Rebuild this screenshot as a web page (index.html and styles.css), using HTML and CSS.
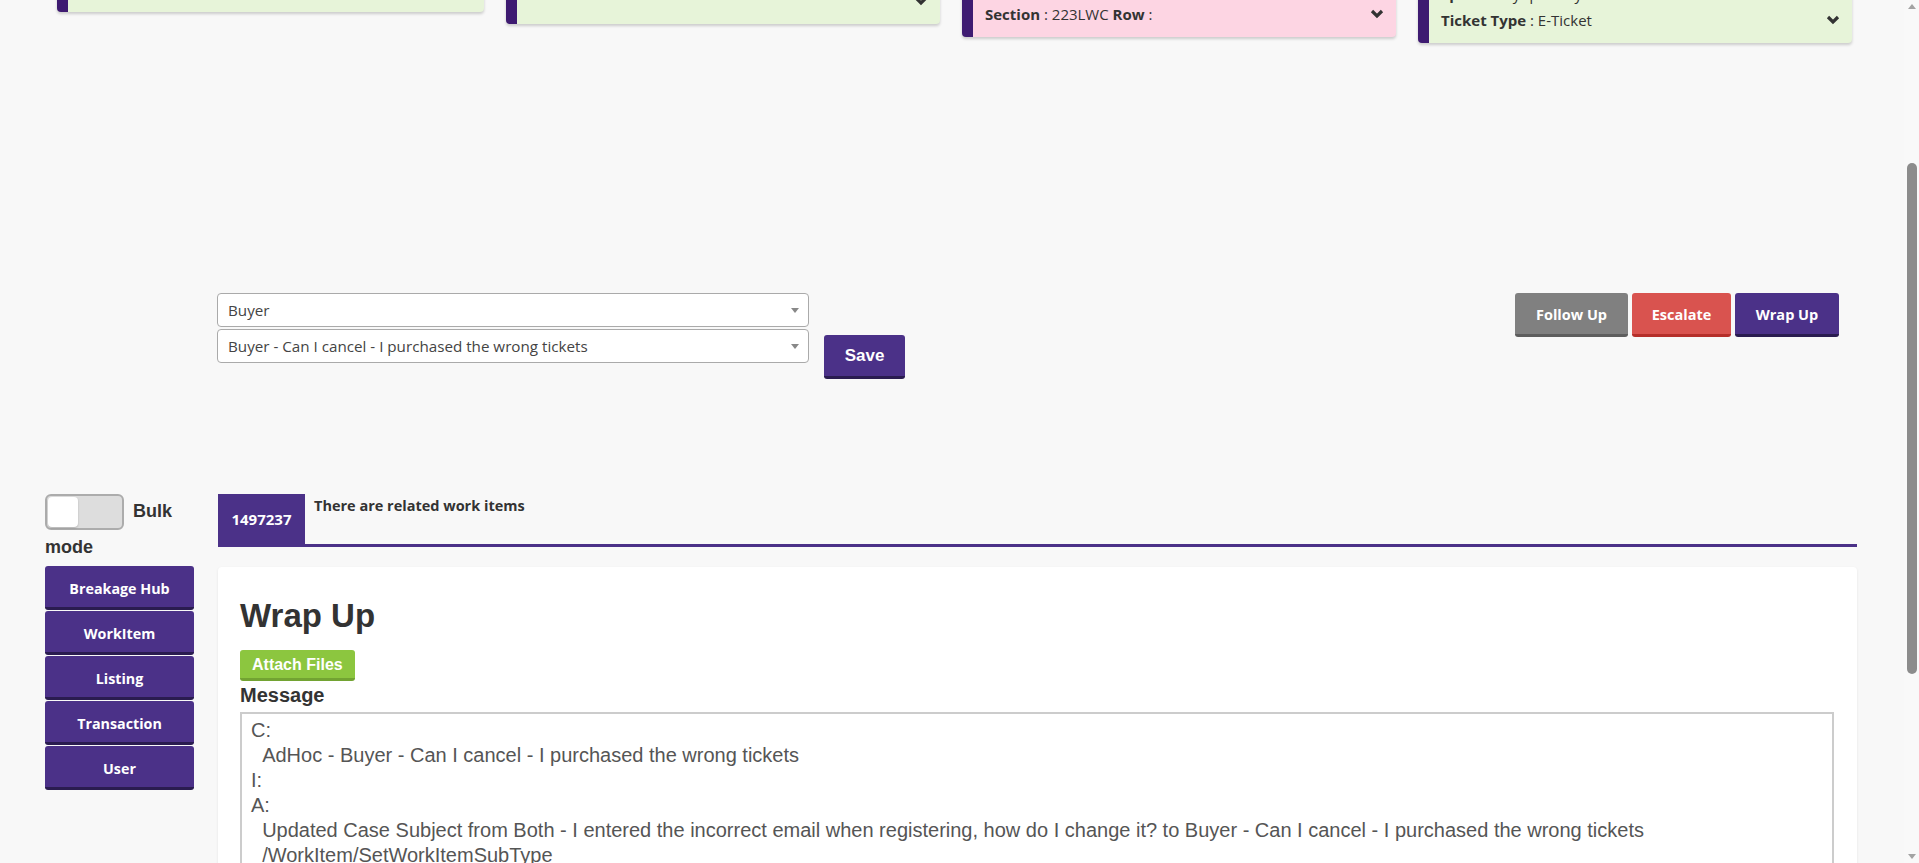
FILE: index.html
```html
<!DOCTYPE html>
<html lang="en">
<head>
    <meta charset="UTF-8">
    <meta name="viewport" content="width=device-width, initial-scale=1.0">
    <title>Work Item - Wrap Up</title>
    <link rel="stylesheet" href="styles.css">
</head>
<body>
<div class="page">
    <div class="main">
        <!-- listing summary cards (page is scrolled, tops are above the fold) -->
        <div class="cards">
            <div class="card green card-1">
                <div class="row"><span><b>Event :</b> Concert</span></div>
                <div class="row"><span><b>Venue :</b> Arena</span></div>
                <div class="row"><span><b>Date :</b> 12/08</span></div>
            </div>
            <div class="card green card-2">
                <div class="row"><span><b>Buyer :</b> Customer</span></div>
                <div class="row"><span><b>Email :</b> -</span></div>
                <div class="row"><span></span>
                    <svg class="chev" viewBox="0 0 14 10"><polyline points="2,2 7,7 12,2"/></svg>
                </div>
            </div>
            <div class="card pink card-3">
                <div class="row"><span><b>Listing :</b> 1497237</span></div>
                <div class="row"><span><b>Seats :</b> 2</span></div>
                <div class="row"><span><b>Section</b> : 223LWC <b>Row</b> :</span>
                    <svg class="chev" viewBox="0 0 14 10"><polyline points="2,2 7,7 12,2"/></svg>
                </div>
            </div>
            <div class="card green card-4">
                <div class="row"><span><b>Quantity :</b> 2</span></div>
                <div class="row"><span><b>Splits :</b> Any quantity</span></div>
                <div class="row"><span><b>Ticket Type</b> : E-Ticket</span>
                    <svg class="chev" viewBox="0 0 14 10"><polyline points="2,2 7,7 12,2"/></svg>
                </div>
            </div>
        </div>

        <div class="classify">
            <div class="selects">
                <div class="select"><span>Buyer</span><span class="caret"></span></div>
                <div class="select"><span>Buyer - Can I cancel - I purchased the wrong tickets</span><span class="caret"></span></div>
            </div>
            <button class="btn btn-save">Save</button>
            <div class="actions">
                <button class="btn btn-grey">Follow Up</button>
                <button class="btn btn-red">Escalate</button>
                <button class="btn btn-purple">Wrap Up</button>
            </div>
        </div>

        <div class="workspace">
            <aside class="sidebar">
                <label class="bulk"><span class="switch"><span class="knob"></span></span>Bulk mode</label>
                <nav class="nav">
                    <button class="btn btn-purple">Breakage Hub</button>
                    <button class="btn btn-purple">WorkItem</button>
                    <button class="btn btn-purple">Listing</button>
                    <button class="btn btn-purple">Transaction</button>
                    <button class="btn btn-purple">User</button>
                </nav>
            </aside>

            <section class="content">
                <div class="tabs">
                    <div class="tab-id">1497237</div>
                    <div class="tab-note">There are related work items</div>
                </div>
                <div class="panel">
                    <h2>Wrap Up</h2>
                    <button class="btn btn-attach">Attach Files</button>
                    <label class="msg-label" for="message">Message</label>
                    <textarea id="message">C:
  AdHoc - Buyer - Can I cancel - I purchased the wrong tickets
I:
A:
  Updated Case Subject from Both - I entered the incorrect email when registering, how do I change it? to Buyer - Can I cancel - I purchased the wrong tickets
  /WorkItem/SetWorkItemSubType</textarea>
                </div>
            </section>
        </div>
    </div>

    <div class="scrollbar">
        <span class="sb-arrow up"></span>
        <span class="sb-thumb"></span>
        <span class="sb-arrow down"></span>
    </div>
</div>
</body>
</html>
```

FILE: styles.css
```css
* { box-sizing: border-box; }
html, body { margin: 0; height: 100%; }
body { background: #f8f8f8; font-family: "Open Sans", sans-serif; color: #333; overflow: hidden; }
.page { display: flex; height: 863px; overflow: hidden; }
.main { flex: 1; min-width: 0; }

/* summary cards */
.cards {
    display: grid;
    grid-template-columns: 427px 434px 434px 434px;
    column-gap: 22px;
    align-items: start;
    margin-top: -60px;
    padding-left: 57px;
}
.card {
    display: flex;
    flex-direction: column;
    justify-content: flex-end;
    overflow: hidden;
    padding: 0 12px 10px;
    border-left: 11px solid #3e1b71;
    border-radius: 4px;
    box-shadow: 0 2px 3px rgba(0, 0, 0, 0.18);
    font-size: 15px;
}
.card.green { background: #e7f4d9; }
.card.pink { background: #fdd5e3; }
.card-1 { height: 72px; }
.card-2 { height: 84px; }
.card-3 { height: 97px; }
.card-4 { height: 103px; }
.row { display: flex; align-items: center; justify-content: space-between; height: 26px; flex: none; white-space: nowrap; }
.chev { width: 14px; height: 10px; fill: none; stroke: #333; stroke-width: 3.2; }

/* subtype selection + actions */
.classify { display: flex; align-items: flex-start; margin-top: 250px; padding: 0 65px 0 217px; }
.selects { width: 592px; display: flex; flex-direction: column; gap: 2px; }
.select {
    height: 34px;
    display: flex;
    align-items: center;
    justify-content: space-between;
    padding: 0 9px 0 10px;
    background: #fff;
    border: 1px solid #aaa;
    border-radius: 4px;
    font-size: 15.2px;
    color: #444;
}
.caret { border-top: 5px solid #888; border-left: 4px solid transparent; border-right: 4px solid transparent; }

.btn {
    border: 0;
    border-bottom: 3px solid;
    border-radius: 3px;
    color: #fff;
    font-family: "Open Sans", sans-serif;
    font-weight: 700;
    font-size: 14px;
    cursor: pointer;
    padding: 0;
}
.btn-purple { background: #4b3188; border-color: #2a1c50; }
.btn-grey { background: #808080; border-color: #5e5e5e; }
.btn-red { background: #d9534f; border-color: #b52f2a; }
.btn-save { margin: 42px 0 0 15px; width: 81px; height: 44px; background: #4b3188; border-color: #2a1c50; font: bold 17px "Liberation Sans", Arial, sans-serif; }
.actions { margin-left: auto; display: flex; gap: 4px; }
.actions .btn { height: 44px; padding-top: 2px; font-size: 14.5px; }
.actions .btn-grey { width: 113px; }
.actions .btn-red { width: 99px; }
.actions .btn-purple { width: 104px; }

/* lower workspace */
.workspace { display: flex; align-items: flex-start; gap: 24px; margin-top: 115px; padding: 0 47px 0 45px; }
.sidebar { width: 149px; flex: none; }
.bulk { display: block; font: bold 18px/34px "Liberation Sans", Arial, sans-serif; color: #333; }
.switch {
    display: inline-block;
    vertical-align: middle;
    width: 79px;
    height: 36px;
    margin-right: 9px;
    padding: 1px;
    background: #ddd;
    border: 2px solid #acacac;
    border-radius: 6px;
}
.knob { display: block; width: 30px; height: 30px; background: #fff; border-radius: 4px; box-shadow: 0 1px 2px rgba(0, 0, 0, 0.2); }
.nav { display: flex; flex-direction: column; gap: 1px; margin-top: 2px; }
.nav .btn { height: 44px; padding-top: 3px; font-size: 14.3px; }

.content { flex: 1; min-width: 0; }
.tabs { display: flex; height: 53px; border-bottom: 3px solid #4b3188; }
.tab-id { width: 87px; display: flex; align-items: center; justify-content: center; background: #4b3188; color: #fff; font-weight: 700; font-size: 15px; }
.tab-note { padding: 2px 9px; font-weight: 700; font-size: 14.5px; line-height: 20px; }

.panel {
    margin-top: 20px;
    height: 400px;
    padding: 29px 23px 0 22px;
    background: #fff;
    border-radius: 4px;
    box-shadow: 0 1px 3px rgba(0, 0, 0, 0.08);
}
.panel h2 { margin: 0; font: bold 33px/40px "Liberation Sans", Arial, sans-serif; color: #333; }
.btn-attach {
    display: block;
    margin-top: 14px;
    height: 31px;
    padding: 2px 12px 0;
    background: #8cc63f;
    border-color: #72a332;
    font: bold 16px "Liberation Sans", Arial, sans-serif;
}
.msg-label { display: block; margin-top: 3px; font: bold 20px/22px "Liberation Sans", Arial, sans-serif; color: #333; }
textarea {
    display: block;
    width: 100%;
    height: 240px;
    margin-top: 6px;
    padding: 4px 9px;
    border: 2px solid #ccc;
    font: 20px/25px "Liberation Sans", Arial, sans-serif;
    color: #555;
    resize: none;
    overflow: hidden;
}

/* fake browser scrollbar */
.scrollbar { width: 15px; flex: none; display: flex; flex-direction: column; align-items: center; background: #f9f9f9; }
.sb-arrow { width: 0; height: 0; border-left: 4px solid transparent; border-right: 4px solid transparent; }
.sb-arrow.up { margin-top: 4px; border-bottom: 5px solid #a3a3a3; }
.sb-arrow.down { margin-top: auto; margin-bottom: 4px; border-top: 5px solid #a3a3a3; }
.sb-thumb { width: 10px; height: 511px; margin-top: 154px; background: #8c8c8c; border-radius: 5px; }
```
